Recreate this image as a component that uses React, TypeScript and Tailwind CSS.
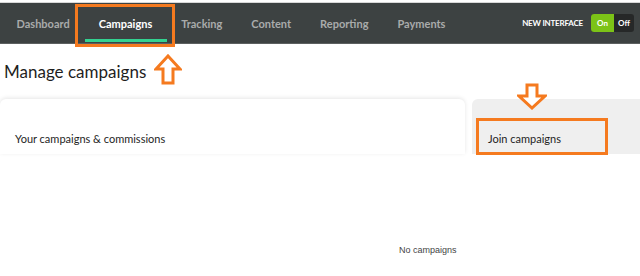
const navItems = ["Dashboard", "Campaigns", "Tracking", "Content", "Reporting", "Payments"];

const UpArrow = () => (
  <svg width="28" height="31" viewBox="0 0 28 31" className="absolute left-[154px] top-[54px]">
    <polygon points="14,2 26,15 19,15 19,29 9,29 9,15 2,15" fill="#fff" stroke="#f57a1f" strokeWidth="3" strokeLinejoin="miter" />
  </svg>
);

const DownArrow = () => (
  <svg width="30" height="27" viewBox="0 0 30 27" className="absolute left-[517px] top-[83px]">
    <polygon points="10,2 20,2 20,13 28,13 15,25 2,13 10,13" fill="#fff" stroke="#f57a1f" strokeWidth="3" strokeLinejoin="miter" />
  </svg>
);

const App = () => {
  return (
    <main
      className="relative w-[640px] h-[276px] overflow-hidden bg-white"
      style={{ fontFamily: "Lato, 'Noto Sans', sans-serif" }}
    >
      {/* top nav */}
      <div className="h-[3px] border-b border-[#d8d8d8] bg-white" />
      <nav className="flex items-stretch h-[41px] bg-[#3d4242] border-b border-[#5c6060] pl-[2px] pr-[6px]">
        {navItems.map((item) => (
          <div key={item} className="relative flex items-center px-[14.5px] pt-[3px]">
            <span
              className={
                item === "Campaigns"
                  ? "text-[11px] font-bold text-white"
                  : "text-[11px] font-bold text-[#a9abab]"
              }
            >
              {item}
            </span>
            {item === "Campaigns" && (
              <div className="absolute left-[1px] right-0 bottom-[1px] h-[3px] bg-[#33d291]" />
            )}
          </div>
        ))}
        <div className="ml-auto flex items-center gap-[8px]">
          <span className="text-[8px] font-bold text-white tracking-[-0.2px]">NEW INTERFACE</span>
          <div className="flex h-[18px] rounded-[3px] overflow-hidden bg-[#262828]">
            <div className="flex items-center justify-center w-[23px] bg-[#7cc317] text-[8px] font-bold text-white">On</div>
            <div className="flex items-center justify-center w-[20px] text-[8px] font-bold text-white">Off</div>
          </div>
        </div>
      </nav>

      {/* title */}
      <h1 className="pl-[4px] pt-[18px] text-[17px] leading-[20px] text-[#1e1e1e]">Manage campaigns</h1>

      {/* panels */}
      <div className="flex gap-[7px] mt-[17px]">
        <div className="w-[465px] h-[55px] bg-white rounded-tr-[6px] rounded-tl-[6px] shadow-[0_-1px_4px_rgba(0,0,0,0.10)] pl-[15px] pt-[26px]">
          <span className="text-[11px] text-[#1e1e1e]">Your campaigns &amp; commissions</span>
        </div>
        <div className="flex-1 h-[55px] bg-[#efefef] rounded-tl-[6px] pl-[16px] pt-[26px]">
          <span className="text-[11px] text-[#1e1e1e]">Join campaigns</span>
        </div>
      </div>

      <p
        className="absolute left-[399px] top-[244px] text-[9px] text-[#444]"
        style={{ fontFamily: "'Liberation Sans', Arial, sans-serif" }}
      >
        No campaigns
      </p>

      {/* annotations */}
      <div className="absolute left-[75px] top-[4px] w-[100px] h-[43px] border-[3px] border-[#f57a1f]" />
      <div className="absolute left-[476px] top-[118px] w-[132px] h-[37px] border-[3px] border-[#f57a1f]" />
      <UpArrow />
      <DownArrow />
    </main>
  );
};

export default App;
